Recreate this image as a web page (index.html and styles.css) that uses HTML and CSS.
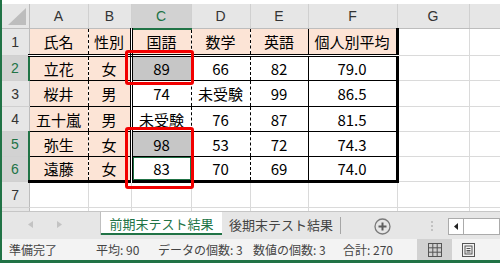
FILE: index.html
```html
<!DOCTYPE html>
<html lang="ja">
<head>
<meta charset="utf-8">
<title>Excel</title>
<link rel="stylesheet" href="styles.css">
</head>
<body>
<div class="app">
  <div class="topgap"></div>
  <div class="sheet">
    <table class="grid">
      <colgroup>
        <col class="w-rh"><col class="w-a"><col class="w-b"><col class="w-c"><col class="w-d"><col class="w-e"><col class="w-f"><col class="w-g"><col class="w-h">
      </colgroup>
      <tr class="r-head">
        <th class="corner"><svg class="tri" width="27" height="24" viewBox="0 0 27 24"><polygon points="6,21 24,4 24,21" fill="#bdbdbd"/></svg></th>
        <th class="ch">A</th><th class="ch">B</th><th class="ch sel">C</th><th class="ch">D</th><th class="ch">E</th><th class="ch">F</th><th class="ch">G</th><th class="ch"></th>
      </tr>
      <tr class="r1">
        <th class="rh">1</th>
        <td class="hd ca">氏名</td><td class="hd cb">性別</td><td class="hd cc">国語</td><td class="hd cd">数学</td><td class="hd ce">英語</td><td class="hd cf">個人別平均</td><td></td><td></td>
      </tr>
      <tr class="r2">
        <th class="rh sel">2</th>
        <td class="dt ca">立花</td><td class="dt cb">女</td><td class="dt cc selc">89</td><td class="dt cd">66</td><td class="dt ce">82</td><td class="dt cf">79.0</td><td></td><td></td>
      </tr>
      <tr class="r3">
        <th class="rh">3</th>
        <td class="dt ca">桜井</td><td class="dt cb">男</td><td class="dt cc">74</td><td class="dt cd">未受験</td><td class="dt ce">99</td><td class="dt cf">86.5</td><td></td><td></td>
      </tr>
      <tr class="r4">
        <th class="rh">4</th>
        <td class="dt ca">五十嵐</td><td class="dt cb">男</td><td class="dt cc">未受験</td><td class="dt cd">76</td><td class="dt ce">87</td><td class="dt cf">81.5</td><td></td><td></td>
      </tr>
      <tr class="r5">
        <th class="rh sel">5</th>
        <td class="dt ca">弥生</td><td class="dt cb">女</td><td class="dt cc selc">98</td><td class="dt cd">53</td><td class="dt ce">72</td><td class="dt cf">74.3</td><td></td><td></td>
      </tr>
      <tr class="r6">
        <th class="rh sel">6</th>
        <td class="dt last ca">遠藤</td><td class="dt last cb">女</td><td class="dt last cc active">83</td><td class="dt last cd">70</td><td class="dt last ce">69</td><td class="dt last cf">74.0</td><td></td><td></td>
      </tr>
      <tr class="r7">
        <th class="rh">7</th>
        <td></td><td></td><td></td><td></td><td></td><td></td><td></td><td></td>
      </tr>
      <tr class="r8">
        <th class="rh">8</th>
        <td></td><td></td><td></td><td></td><td></td><td></td><td></td><td></td>
      </tr>
    </table>
  </div>
  <div class="tabbar">
    <div class="tabnav">
      <svg class="nav-l" width="5" height="7" viewBox="0 0 5 7"><polygon points="5,0 0,3.5 5,7" fill="#c3c3c3"/></svg>
      <svg class="nav-r" width="5" height="7" viewBox="0 0 5 7"><polygon points="0,0 5,3.5 0,7" fill="#c3c3c3"/></svg>
    </div>
    <div class="tab active">前期末テスト結果</div>
    <div class="tab">後期末テスト結果</div>
    <div class="tabsep"></div>
    <div class="addsheet">
      <svg width="17" height="17" viewBox="0 0 17 17"><circle cx="8.5" cy="8.5" r="7.5" fill="none" stroke="#7a7a7a" stroke-width="1.3"/><path d="M8.5 4.5V12.5M4.5 8.5H12.5" stroke="#5f5f5f" stroke-width="2"/></svg>
    </div>
    <div class="splitter"><i></i><i></i><i></i></div>
    <div class="hscroll">
      <div class="hs-btn"><svg width="4" height="7" viewBox="0 0 4 7"><polygon points="4,0 0,3.5 4,7" fill="#222"/></svg></div>
      <div class="hs-track"></div>
    </div>
  </div>
  <div class="status">
    <span class="st st-ready">準備完了</span>
    <span class="st st-avg">平均: 90</span>
    <span class="st st-cnt">データの個数: 3</span>
    <span class="st st-num">数値の個数: 3</span>
    <span class="st st-sum">合計: 270</span>
    <span class="view view-normal">
      <svg width="14" height="14" viewBox="0 0 14 14"><rect x="0.5" y="0.5" width="13" height="13" fill="none" stroke="#555"/><path d="M4.8 0.5V13.5M9.2 0.5V13.5M0.5 4.8H13.5M0.5 9.2H13.5" stroke="#555"/></svg>
    </span>
    <span class="view view-page">
      <svg width="13" height="14" viewBox="0 0 13 14"><rect x="0.5" y="0.5" width="12" height="13" fill="none" stroke="#555"/><rect x="3" y="3" width="7" height="8" fill="none" stroke="#555"/><path d="M4.5 5.5H8.5M4.5 7.5H8.5M4.5 9H8.5" stroke="#555"/></svg>
    </span>
  </div>
  <div class="redbox rb1"></div>
  <div class="redbox rb2"></div>
</div>
</body>
</html>
```

FILE: styles.css
```css
* { box-sizing: border-box; }
html, body { margin: 0; padding: 0; }
body {
  width: 500px;
  height: 263px;
  overflow: hidden;
  background: #fff;
  font-family: "Noto Sans CJK JP", "Noto Sans", sans-serif;
}
.app {
  position: relative;
  width: 500px;
  height: 263px;
  border-left: 2px solid #217346;
  border-bottom: 3px solid #217346;
  display: flex;
  flex-direction: column;
  overflow: hidden;
}
.topgap { height: 4px; flex: none; }
.sheet { height: 207px; flex: none; overflow: hidden; }

.grid {
  border-collapse: collapse;
  table-layout: fixed;
  width: 507px;
}
.w-rh { width: 27px; }
.w-a { width: 59px; }
.w-b { width: 43px; }
.w-c { width: 60px; }
.w-d { width: 59px; }
.w-e { width: 58px; }
.w-f { width: 89px; }
.w-g { width: 72px; }
.w-h { width: 40px; }

.r-head { height: 24px; }
.r1 { height: 27px; }
.r2 { height: 25px; }
.r3 { height: 26px; }
.r4 { height: 25px; }
.r5 { height: 25px; }
.r6 { height: 25px; }
.r7 { height: 26px; }
.r8 { height: 26px; }

.grid td {
  padding: 0;
  border: 1px solid #dadada;
  text-align: center;
  vertical-align: middle;
  font-size: 15px;
  line-height: 1;
  color: #000;
  white-space: nowrap;
  overflow: hidden;
}
.grid th {
  padding: 0;
  background: #e6e6e6;
  font-family: "Liberation Sans", Arial, sans-serif;
  font-weight: normal;
  font-size: 14px;
  line-height: 1;
  color: #333;
  text-align: center;
  vertical-align: middle;
}
.grid th.corner {
  position: relative;
  border-right: 1px solid #bdbdbd;
  border-bottom: 1px solid #bdbdbd;
}
.tri { display: block; }
.grid th.ch {
  border-right: 1px solid #d0d0d0;
  border-bottom: 1px solid #bdbdbd;
}
.grid th.ch.sel {
  background: #d2d2d2;
  color: #217346;
  border-bottom: 2px solid #217346;
}
.grid th.rh {
  border-right: 1px solid #bdbdbd;
  border-bottom: 1px solid #d0d0d0;
}
.grid th.rh.sel {
  background: #d2d2d2;
  color: #217346;
  border-right: 2px solid #217346;
}

/* formatted table */
.grid td.hd,
.grid td.ca,
.grid td.cb { background: #fce4d6; }
.grid td.hd { border-bottom: 3px double #000; }
.grid td.dt { border-top: 1px solid #000; border-bottom: 1px solid #000; }
.grid td.dt.last { border-bottom: 3px solid #000; }
.grid td.ca { border-right: 1px dashed #000; }
.grid td.cb { border-left: 1px dashed #000; border-right: 3px double #000; }
.grid td.cc { border-left: 3px double #000; border-right: 1px dashed #000; }
.grid td.cd { border-left: 1px dashed #000; border-right: 1px dashed #000; }
.grid td.ce { border-left: 1px dashed #000; border-right: 1px solid #000; }
.grid td.cf { border-left: 1px solid #000; border-right: 3px solid #000; }
.grid td.selc { background: #c6c6c6; }
.grid td.active { box-shadow: inset 0 0 0 1px #217346; }

/* red highlight frames */
.redbox {
  position: absolute;
  border: 3px solid #f20000;
  border-radius: 3px;
}
.rb1 { left: 123px; top: 50px; width: 69px; height: 35px; }
.rb2 { left: 123px; top: 127px; width: 69px; height: 62px; }

/* sheet tabs */
.tabbar {
  flex: none;
  height: 28px;
  background: #e6e6e6;
  border-top: 1px solid #c6c6c6;
  display: flex;
  align-items: flex-start;
}
.tabnav {
  width: 99px;
  height: 23px;
  border-right: 1px solid #bfbfbf;
  display: flex;
  align-items: center;
  padding-left: 26px;
  padding-top: 2px;
}
.nav-l { margin-right: 24px; }
.tab {
  height: 23px;
  display: flex;
  align-items: center;
  justify-content: center;
  font-size: 13px;
  color: #444;
  padding-top: 2px;
}
.tab.active {
  width: 121px;
  background: #fff;
  color: #217346;
  border-bottom: 2px solid #217346;
}
.tab:not(.active) { width: 118px; }
.tabsep {
  width: 1px;
  height: 17px;
  margin-top: 5px;
  background: #a6a6a6;
}
.addsheet {
  width: 82px;
  height: 28px;
  display: flex;
  align-items: center;
  justify-content: center;
  padding-top: 1px;
}
.addsheet svg { display: block; }
.splitter {
  margin-left: 8px;
  margin-top: 9px;
  width: 2px;
  display: flex;
  flex-direction: column;
  gap: 2px;
}
.splitter i {
  display: block;
  width: 2px;
  height: 2px;
  background: #c2c2c2;
}
.hscroll {
  margin-left: 15px;
  margin-top: 6px;
  flex: 1;
  height: 17px;
  background: #fff;
  border: 1px solid #ababab;
  display: flex;
}
.hs-btn {
  width: 15px;
  border-right: 1px solid #ababab;
  display: flex;
  align-items: center;
  justify-content: center;
}
.hs-btn svg { display: block; }
.hs-track { flex: 1; }

/* status bar */
.status {
  flex: none;
  height: 21px;
  background: #f3f3f3;
  display: flex;
  align-items: center;
  padding-left: 7px;
  font-size: 12px;
  color: #444;
}
.st { white-space: nowrap; line-height: 1; }
.st-ready { width: 87px; }
.st-avg { width: 62px; }
.st-cnt { width: 95px; }
.st-num { width: 90px; }
.st-sum { width: 74px; }
.view {
  height: 21px;
  display: flex;
  align-items: center;
  justify-content: center;
}
.view svg { display: block; }
.view-normal { width: 35px; background: #d2d2d2; }
.view-page { width: 33px; }
```
